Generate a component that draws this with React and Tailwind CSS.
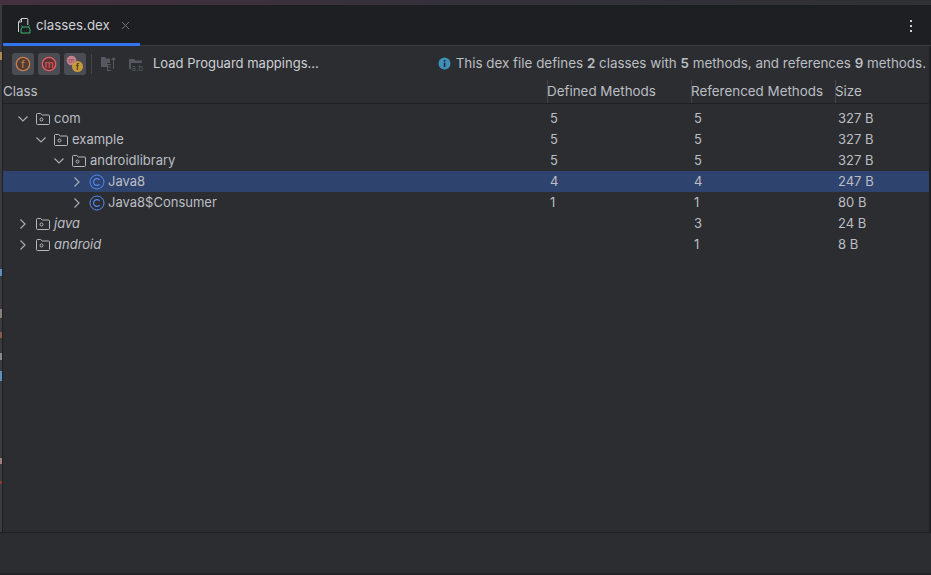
import React from "react";

const F = "[font-family:Inter,'Noto_Sans',sans-serif]";

function Chevron({ open }) {
  return (
    <svg width="16" height="16" viewBox="0 0 16 16" fill="none" stroke="#a8adb5" strokeWidth="1.2" className="shrink-0">
      {open ? <path d="M3.5 5.5l4.5 4.5 4.5-4.5" /> : <path d="M5.5 3.5l4.5 4.5-4.500 4.500" />}
    </svg>
  );
}

function Pkg() {
  return (
    <svg width="16" height="16" viewBox="0 0 16 16" fill="none" stroke="#b4b8bf" className="shrink-0">
      <path d="M1.5 3.5a1 1 0 0 1 1-1h3.2l1.6 1.500h6.200a1 1 0 0 1 1 1v7.500a1 1 0 0 1-1 1h-11a1 1 0 0 1-1-1z" />
      <circle cx="6.500" cy="8.500" r="1.500" />
    </svg>
  );
}

function Cls() {
  return (
    <svg width="16" height="16" viewBox="0 0 16 16" fill="none" className="shrink-0">
      <circle cx="8" cy="8" r="7" stroke="#548af7" />
      <path d="M10.600 5.900A3.400 3.400 0 1 0 10.600 10.100" stroke="#548af7" strokeWidth="1.100" />
    </svg>
  );
}

function Ring({ letter, color, fill }) {
  return (
    <div className="w-[22px] h-[22px] rounded-[3px] bg-[#4a4d53] flex items-center justify-center">
      <svg width="16" height="16" viewBox="0 0 16 16">
        <circle cx="8" cy="8" r="6.700" fill={fill} stroke={color} strokeWidth="1.300" />
        <text x="8" y="11.500" textAnchor="middle" fontSize="10.500" fontFamily="Inter" fill={color}>{letter}</text>
      </svg>
    </div>
  );
}

function Mixed() {
  return (
    <div className="w-[22px] h-[22px] rounded-[3px] bg-[#4a4d53] flex items-center justify-center">
      <svg width="18" height="18" viewBox="0 0 18 18">
        <circle cx="5.500" cy="5.500" r="4.800" fill="#c9808f" />
        <text x="5.500" y="8" textAnchor="middle" fontSize="7" fontFamily="Inter" fill="#7d4a55">m</text>
        <circle cx="11.500" cy="11.500" r="5.500" fill="#c79a3a" />
        <text x="11.500" y="14.500" textAnchor="middle" fontSize="8.500" fontWeight="600" fontFamily="Inter" fill="#4a3a18">f</text>
      </svg>
    </div>
  );
}

const rows = [
  { d: 0, open: true, icon: "p", name: "com", a: "5", b: "5", s: "327 B" },
  { d: 1, open: true, icon: "p", name: "example", a: "5", b: "5", s: "327 B" },
  { d: 2, open: true, icon: "p", name: "androidlibrary", a: "5", b: "5", s: "327 B" },
  { d: 3, icon: "c", name: "Java8", a: "4", b: "4", s: "247 B", sel: true },
  { d: 3, icon: "c", name: "Java8$Consumer", a: "1", b: "1", s: "80 B" },
  { d: 0, icon: "p", name: "java", a: "", b: "3", s: "24 B", it: true },
  { d: 0, icon: "p", name: "android", a: "", b: "1", s: "8 B", it: true },
];

const indent = ["pl-[12px]", "pl-[30px]", "pl-[48px]", "pl-[66px]"];

const bits = [
  { h: "h-[8px]", c: "bg-[#b08a55]", m: "mt-[47px]" },
  { h: "h-[7px]", c: "bg-[#5d8fc2]", m: "mt-[209px]" },
  { h: "h-[9px]", c: "bg-[#8a8076]", m: "mt-[33px]" },
  { h: "h-[6px]", c: "bg-[#8a5a50]", m: "mt-[14px]" },
  { h: "h-[7px]", c: "bg-[#85888d]", m: "mt-[15px]" },
  { h: "h-[10px]", c: "bg-[#5d8fc2]", m: "mt-[11px]" },
  { h: "h-[6px]", c: "bg-[#a08078]", m: "mt-[77px]" },
  { h: "h-[3px]", c: "bg-[#8a3a30]", m: "mt-[17px]" },
];

function Header({ w, children, first }) {
  return (
    <div className={`${w} h-full flex items-center text-[13.4px] ${first ? "" : "border-l border-[#43454a]"}`}>
      <span className={first ? "" : "-ml-px"}>{children}</span>
    </div>
  );
}

export default function App() {
  return (
    <div className={`${F} w-[931px] h-[575px] bg-[#2b2d30] text-[13px] text-[#bcbec4] flex flex-col overflow-hidden`}>
      <div className="h-[5px] shrink-0 bg-linear-to-r from-[#45303f] via-[#33303a] to-[#303134]" />
      <div className="flex-1 min-h-0 flex">
        <div className="w-[2px] shrink-0 bg-[#3a3b3f] flex flex-col">
          {bits.map((b, i) => (
            <span key={i} className={`block shrink-0 ${b.h} ${b.c} ${b.m}`} />
          ))}
        </div>
        <div className="flex-1 min-w-0 flex flex-col border-l border-[#1e1f22]">
          <div className="h-[41px] shrink-0 bg-[#1e1f22] flex flex-col border-b border-[#393b40]">
            <div className="flex-1 flex items-center justify-between pt-[3px]">
              <div className="flex items-center pl-[14px]">
                <svg width="16" height="16" viewBox="0 0 16 16" fill="none" className="shrink-0">
                  <path d="M1.500 14V4L4.500 0.500H10a.8.8 0 0 1 .8.8V7" stroke="#ced0d6" />
                  <path d="M1.500 4h3V0.500" stroke="#ced0d6" />
                  <path d="M4 15v-3.500L5.500 9h6L13 11.500V15zM5.500 9L4.500 7.500M11.500 9l1-1.500" stroke="#3fb56c" />
                </svg>
                <span className="ml-[3px] text-[13.3px] text-[#ced0d6]">classes.dex</span>
                <svg width="9" height="9" viewBox="0 0 9 9" stroke="#6f737a" className="ml-[11px]"><path d="M1 1l7 7M8 1l-7 7" /></svg>
              </div>
              <div className="flex flex-col gap-[3px] mr-[19px]">
                <span className="w-[2px] h-[2px] bg-[#ced0d6]" /><span className="w-[2px] h-[2px] bg-[#ced0d6]" /><span className="w-[2px] h-[2px] bg-[#ced0d6]" />
              </div>
            </div>
            <div className="h-[3px] w-[137px] bg-[#3574f0] shrink-0 -mb-px" />
          </div>

          <div className="flex-1 min-h-0 flex flex-col border-r-2 border-[#1e1f22]">
            <div className="h-[34px] shrink-0 flex items-center pt-[1px] pl-[9px] pr-[3px]">
              <div className="flex items-center gap-[4px]">
                <Ring letter="f" color="#cc7f4e" fill="#4f3c33" />
                <Ring letter="m" color="#ea5c60" fill="#5a3438" />
                <Mixed />
              </div>
              <div className="w-px h-[20px] bg-[#43454a] ml-[5px]" />
              <svg width="16" height="16" viewBox="0 0 16 16" className="ml-[9px]" fill="#55585e">
                <path d="M0 1h4l1 1.500h4V7H6v4H0z" /><path d="M6 8h4v1H7v1.500h3v1H7V14h3v1H6zM12.500 1l2.500 3h-2v9h-1V4h-2z" />
              </svg>
              <svg width="16" height="16" viewBox="0 0 16 16" className="ml-[11px]" fill="#55585e">
                <path d="M1 3h5l1.500 1.500H14V7H1zM1 7h2v6H1z" />
                <text x="3.500" y="15" fontSize="8" fontFamily="Inter">a.b</text>
              </svg>
              <span className="ml-[9px] text-[#ced0d6]">Load Proguard mappings...</span>
              <div className="ml-auto flex items-center text-[13.4px]">
                <svg width="13" height="13" viewBox="0 0 13 13" className="mr-[5px]">
                  <circle cx="6.500" cy="6.500" r="6" fill="#3f8fb8" />
                  <rect x="5.800" y="5.600" width="1.500" height="4.400" fill="#1e1f22" />
                  <rect x="5.800" y="3" width="1.500" height="1.600" fill="#1e1f22" />
                </svg>
                <span>This dex file defines <b className="font-semibold">2</b> classes with <b className="font-semibold">5</b> methods, and references <b className="font-semibold">9</b> methods.</span>
              </div>
            </div>

            <div className="h-[24px] shrink-0 flex items-center border-b border-[#1e1f22]">
              <Header w="w-[544px]" first>Class</Header>
              <Header w="w-[144px]">Defined Methods</Header>
              <Header w="w-[144px]">Referenced Methods</Header>
              <Header w="flex-1">Size</Header>
            </div>

            <div className="flex-1 min-h-0 pt-[4px]">
              {rows.map((r) => (
                <div key={r.name} className={`h-[21px] flex items-center ${r.sel ? "bg-[#2e436e]" : ""}`}>
                  <div className={`w-[544px] flex items-center ${indent[r.d]}`}>
                    <Chevron open={r.open} />
                    <span className="w-[4px]" />
                    {r.icon === "p" ? <Pkg /> : <Cls />}
                    <span className={`ml-[3px] ${r.it ? "italic" : ""}`}>{r.name}</span>
                  </div>
                  <div className="w-[144px] pl-[3px]">{r.a}</div>
                  <div className="w-[144px] pl-[3px]">{r.b}</div>
                  <div className="flex-1 pl-[3px]">{r.s}</div>
                </div>
              ))}
            </div>
          </div>
        </div>
      </div>
      <div className="h-[41px] shrink-0 border-t border-[#1e1f22]" />
      <div className="h-[2px] shrink-0 bg-[#232427]" />
    </div>
  );
}
